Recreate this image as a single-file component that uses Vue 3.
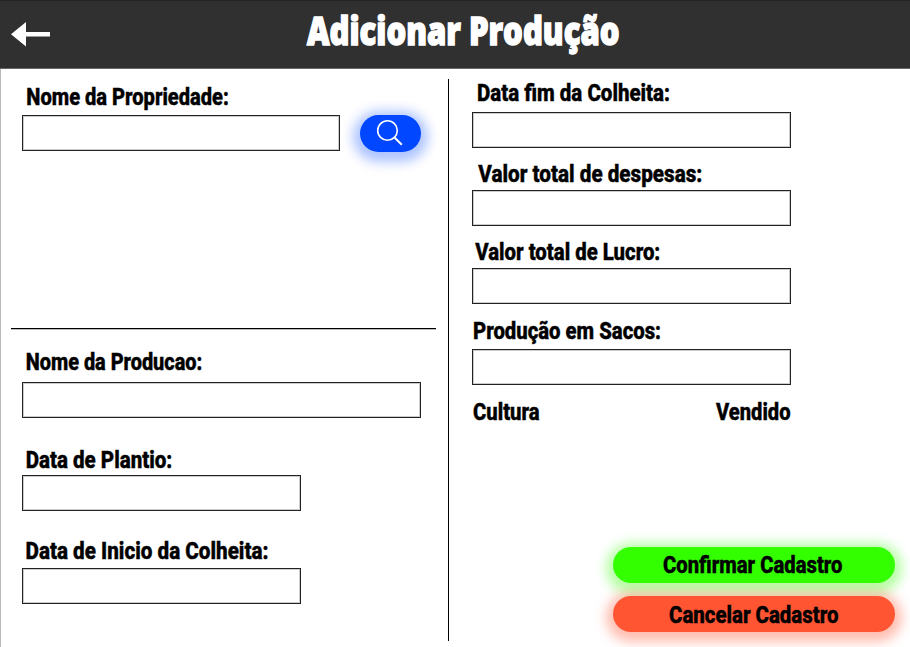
<script setup>
import { h } from 'vue'

// Condensed caption: the glyphs are fitted to the given width.
const Caption = (props) =>
  h('svg', { class: 'caption', width: props.w + props.x, height: props.height || 24 }, [
    h('text', { x: props.x, y: props.base || 18, textLength: props.w, lengthAdjust: 'spacingAndGlyphs' }, props.text),
  ])
Caption.props = ['text', 'x', 'w', 'height', 'base']

const productionFields = [
  { id: 'nome', text: 'Nome da Producao:', x: 3.7, w: 176.6, height: 30.5, base: 18 },
  { id: 'plantio', text: 'Data de Plantio:', x: 3.7, w: 146.6, height: 25, base: 18 },
  { id: 'inicio', text: 'Data de Inicio da Colheita:', x: 3.5, w: 243, height: 27.5, base: 18 },
]
const resultFields = [
  { id: 'fim', text: 'Data fim da Colheita:', x: 5, w: 193, height: 30, base: 18.5 },
  { id: 'despesas', text: 'Valor total de despesas:', x: 6.3, w: 224, height: 26, base: 18 },
  { id: 'lucro', text: 'Valor total de Lucro:', x: 3.3, w: 185, height: 26, base: 18 },
  { id: 'sacos', text: 'Produção em Sacos:', x: 1, w: 188, height: 28, base: 18 },
]
</script>

<template>
  <div class="page">
    <header class="topbar">
      <svg class="back" width="40" height="26" viewBox="0 0 40 26">
        <path d="M0 13.3 15 1V11h24v4.5H15v10z" fill="#fff" />
      </svg>
      <svg class="title" width="320" height="50">
        <text x="2" y="37" textLength="312.5" lengthAdjust="spacingAndGlyphs">Adicionar Produção</text>
      </svg>
    </header>
    <main class="columns">
      <div class="left">
        <section class="property">
          <label for="propriedade"><Caption text="Nome da Propriedade:" :x="4.3" :w="202.5" :height="28" /></label>
          <div class="search-row">
            <input id="propriedade" class="box" />
            <button class="search" type="button">
              <svg width="28" height="28" viewBox="0 0 28 28" fill="none" stroke="#fff" stroke-width="1.6">
                <circle cx="11.5" cy="11.5" r="9.8" />
                <path d="m18.5 18.5 7.3 7.3" stroke-width="2" />
              </svg>
            </button>
          </div>
        </section>
        <section class="production">
          <div v-for="f in productionFields" :key="f.id" class="field" :class="f.id">
            <label :for="f.id"><Caption v-bind="f" /></label>
            <input :id="f.id" class="box" />
          </div>
        </section>
      </div>
      <div class="divider"></div>
      <div class="right">
        <div v-for="f in resultFields" :key="f.id" class="field" :class="f.id">
          <label :for="f.id"><Caption v-bind="f" /></label>
          <input :id="f.id" class="box" />
        </div>
        <div class="heads">
          <Caption text="Cultura" :x="1" :w="66.5" />
          <Caption text="Vendido" :x="0" :w="74.5" />
        </div>
        <div class="actions">
          <button class="confirm" type="button"><Caption text="Confirmar Cadastro" :x="0" :w="179.5" /></button>
          <button class="cancel" type="button"><Caption text="Cancelar Cadastro" :x="1" :w="169.5" :base="18.5" /></button>
        </div>
      </div>
    </main>
  </div>
</template>

<style>
body {
  background: #fff;
  overflow: hidden;
}
</style>

<style scoped>
.page {
  width: 910px;
  height: 647px;
  box-sizing: border-box;
  display: flex;
  flex-direction: column;
  overflow: hidden;
  font-family: Roboto, sans-serif;
}
.topbar {
  height: 69px;
  box-sizing: border-box;
  flex: none;
  display: flex;
  align-items: flex-start;
  background: #303030;
  border-top: 1px solid #232323;
  border-bottom: 1px solid #686868;
}
.back {
  margin: 20px 0 0 11px;
}
.title {
  margin: 7px 0 0 254px;
  overflow: visible;
  font-family: "Open Sans", sans-serif;
  font-size: 38px;
  font-weight: 800;
  fill: #fff;
  stroke: #fff;
  stroke-width: 1.5px;
}
.columns {
  flex: 1;
  display: flex;
  border-left: 1px solid #bbb;
}
.left {
  width: 446.6px;
  flex: none;
}
.property {
  box-sizing: content-box;
  margin: 0 11.6px 0 10px;
  padding: 18px 0 0 11px;
  height: 241px;
  border-bottom: 1px solid #000;
  box-shadow: 0 1px 0 #bbb;
}
.production {
  padding: 22.5px 0 0 21px;
}
label,
.caption {
  display: block;
}
:deep(.caption) {
  display: block;
  overflow: visible;
  font-family: Roboto, sans-serif;
  font-size: 23.5px;
  font-weight: 800;
  fill: #000;
  stroke: #000;
  stroke-width: 0.45px;
}
.box {
  display: block;
  box-sizing: border-box;
  height: 36px;
  padding: 0 8px;
  border: 1px solid #222;
  border-radius: 0;
  background: #fff;
  box-shadow: inset 0 0 0 1px rgba(0, 0, 0, 0.2);
  font: 18px Roboto, sans-serif;
}
.search-row {
  display: flex;
  gap: 20px;
}
.search-row .box {
  width: 318px;
}
.search {
  width: 61px;
  height: 36.5px;
  padding: 0 1px 1px 0;
  border: 0;
  border-radius: 19px;
  background: #0047ff;
  box-shadow: 0 3px 12px 7px rgba(0, 71, 255, 0.32);
  display: flex;
  align-items: center;
  justify-content: center;
}
.nome .box {
  width: 399px;
}
.plantio .box,
.inicio .box {
  width: 279px;
}
.plantio {
  margin-top: 32px;
}
.inicio {
  margin-top: 29.5px;
}
.divider {
  width: 1.4px;
  flex: none;
  height: 562px;
  margin-top: 10px;
  background: #000;
}
.right {
  flex: 1;
  display: flex;
  flex-direction: column;
  padding: 13px 15.5px 0 23px;
}
.right .box {
  width: 319px;
}
.despesas,
.lucro {
  margin-top: 16px;
}
.sacos,
.heads {
  margin-top: 17px;
}
.heads {
  width: 319px;
  display: flex;
  justify-content: space-between;
}
.actions {
  margin: 121px 0 0 auto;
  display: flex;
  flex-direction: column;
  gap: 13.5px;
}
.actions button {
  width: 282px;
  height: 35.7px;
  padding: 8px 1px 0 0;
  border: 0;
  border-radius: 18px;
  display: flex;
  align-items: flex-start;
  justify-content: center;
}
.confirm {
  background: #3f0;
  box-shadow: 0 3px 12px 7px rgba(51, 255, 0, 0.36);
}
.cancel {
  background: #f53;
  box-shadow: 0 3px 12px 7px rgba(255, 85, 51, 0.38);
}
</style>
